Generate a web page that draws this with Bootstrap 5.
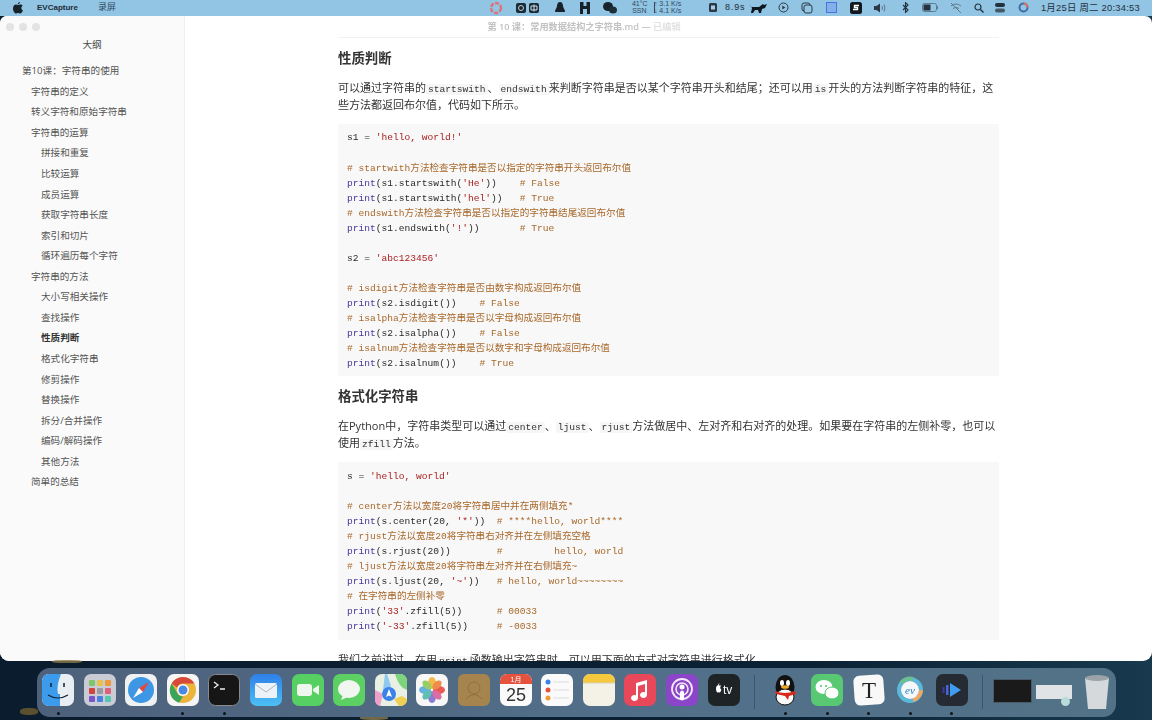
<!doctype html>
<html lang="zh"><head><meta charset="utf-8"><title>EVCapture</title>
<link href="https://cdn.jsdelivr.net/npm/bootstrap@5.3.0/dist/css/bootstrap.min.css" rel="stylesheet">
<style>
html,body{height:100%}
body{width:1152px;height:720px;overflow:hidden;background:linear-gradient(90deg,#0a1c2d 0,#0b2234 70%,#183a4e 100%);font-family:"Open Sans","Noto Sans CJK SC",sans-serif;color:#333;position:relative;filter:blur(.4px)}
.menubar{height:16px;background:#92c4e3;font-family:"Liberation Sans","Noto Sans CJK SC",sans-serif;font-size:9px;color:#1e2c38;padding-left:13px;white-space:nowrap}
.menubar svg{display:block}
.appname{font-weight:700;margin-left:14px;width:61px;font-size:8px}
.appmenu{color:#2f4a5e}
.statrow{padding-right:12px}
.stat-temp{font-size:7px;line-height:6.5px;color:#2f4a5e;width:15px;text-align:center;margin-right:7px;border-right:0}
.stat-sep{width:1px;height:11px;background:#2f4a5e;margin-right:-1px}
.stat-speed{font-size:7px;line-height:6.5px;color:#2f4a5e;width:30px;margin-right:24px}
.chipnum{letter-spacing:.9px;width:21px;margin-left:7px;margin-right:3px}
.m3{margin-right:3px}.m5{margin-right:5px}.m13{margin-right:13px}.m15{margin-right:15px}.m16{margin-right:16px}
.s21{width:21.500px}.s22{width:22px}.s23{width:23.500px}.s24{width:24px}.s24b{width:24.500px}.s25{width:25px}.s26{width:26px}
.s21,.s22,.s23,.s24,.s24b,.s25,.s26{flex:none}
.clock{font-size:9.4px;letter-spacing:.25px;margin-left:5px;color:#22313d}
.winframe{height:645px;background:#fff;border-radius:7px 7px 9px 9px;overflow:hidden;position:relative}
.lights{position:absolute;left:6px;top:7px;gap:5px}
.lights i{display:block;width:8px;height:8px;border-radius:50%;background:#e3e3e3}
.wintitle{position:absolute;left:0;right:0;top:4px;padding-left:16px;text-align:center;font-size:9.200px;line-height:13px;color:#c2c2c2;font-weight:600}
.wintitle em{font-style:normal;color:#e2e2e2}
.outline{width:185px;flex:none;background:#fafafa;border-right:1px solid #f0f0f0;height:645px;font-size:9.6px;color:#555;padding-top:21px}
.outline-h{text-align:center;font-size:9.6px;line-height:16px;margin-bottom:8.3px;color:#444}
.oitem{height:20.55px;line-height:20.55px;white-space:nowrap}
.ol1{padding-left:22px}.ol2{padding-left:31px}.ol3{padding-left:41px}
.oactive{font-weight:700;color:#333}
.docpane{padding-left:153px;width:814px;height:645px;overflow:hidden}
.docrule{border-top:1px solid #f2f2f2;margin-top:21px;height:0;width:661px}
.dochead{font-size:13.4px;line-height:20px;font-weight:600;color:#333;margin:0}
.docpara{font-size:11px;line-height:17.2px;margin:0;color:#333;width:661px}
.docpara code{font-family:"Liberation Mono",monospace;font-size:9.6px;line-height:1;color:#333;background:#f6f6f6;padding:0 2px;border-radius:2px}
.codewrap{background:#f8f8f8;width:661px;margin:0;padding:6.500px 9px 5px;font-family:"Liberation Mono","Noto Sans CJK SC",monospace;font-size:9.6px;line-height:15.07px;color:#2a2a2a;white-space:pre;overflow:hidden}
.kb{color:#44389c}.ks{color:#a22}.kc{color:#a8682a}
.gap-a{margin-top:9.5px}.gap-b{margin-top:11px}.gap-b2{margin-top:10.5px}.gap-c{margin-top:11px}.gap-d{margin-top:10px}.gap-e{margin-top:11.5px}
.dockbar{position:absolute;left:37px;top:668px;width:1079px;height:49px;background:linear-gradient(90deg,#4e617b,#52708a 60%,#527287);border-radius:13px;padding:6px 0 0 5px}
.dockbar svg{display:block;width:32px;height:32px;flex:none}
.dslot{width:41.6px;flex:none;position:relative;height:40px}
.dslot.on::after{content:"";position:absolute;left:14.500px;top:38px;width:3px;height:3px;border-radius:50%;background:#0b1218}
.dsep1,.dsep2{width:1px;height:34px;background:#3f5568;flex:none;margin-top:1px}
.dsep1{margin:1px 14px 0 5.400px}
.dsep2{margin:1px 10px 0 4.500px}
.speck{position:absolute;background:#8a7a4a;border-radius:40%;opacity:.8}
.sp1{left:52px;top:660px;width:30px;height:3px}
.sp2{left:20px;top:708px;width:18px;height:7px;background:#6e5c30}
.sp3{left:360px;top:716px;width:28px;height:4px}
.thumbb{width:39px;height:24px;background:#1a1a1a;border:1px solid #4a5a68;margin-top:5px;flex:none}
.thumbw{width:36px;height:14px;background:#dfe3e6;margin:11px 0 0 4px;flex:none;position:relative}
.thumbw::after{content:"";position:absolute;right:2px;top:12px;width:9px;height:9px;border-radius:50%;background:#b8dcd8}
.dockbar svg.trashcan{margin-left:9px;width:32px;height:36px}
</style></head><body>
<div class="menubar d-flex align-items-center">
  <svg width="10" height="12" viewBox="0 0 10 12"><path fill="#17222b" d="M7 0c0 1.200-1 2.300-2.200 2.300C4.700 1.100 5.800.1 7 0zM5 3c.7 0 1.400-.5 2.400-.5 1 0 1.800.5 2.300 1.200-2 1.200-1.600 3.800.3 4.600-.6 1.500-1.700 3.200-2.800 3.200-.8 0-1.100-.5-2.100-.5s-1.400.5-2.100.5C1.700 11.500 0 8.900 0 6.500 0 4 1.500 2.600 3 2.600c.8 0 1.400.4 2 .4z"/></svg>
  <span class="appname">EVCapture</span><span class="appmenu">录屏</span>
  <div class="ms-auto d-flex align-items-center statrow">
    <svg width="14" height="14" viewBox="0 0 14 14" class="m13"><circle cx="7" cy="7" r="5" fill="none" stroke="#e0707a" stroke-width="2.400" stroke-dasharray="4 1.500"/></svg>
    <svg width="10" height="10" viewBox="0 0 10 10" class="m3"><rect width="10" height="10" rx="2" fill="#1c2a34"/><circle cx="5" cy="5" r="2.500" fill="none" stroke="#bcd"/></svg>
    <svg width="10" height="10" viewBox="0 0 10 10" class="m16"><rect width="10" height="10" rx="2" fill="#1c2a34"/><path d="M2 3h6v4H2zM5 1.500v7" fill="none" stroke="#cde"/></svg>
    <svg width="10" height="12" viewBox="0 0 10 12" class="m15"><path fill="#17222b" d="M5 0c2 0 3 2 3 4 0 2 2 3 2 6H0c0-3 2-4 2-6 0-2 1-4 3-4z"/></svg>
    <svg width="10" height="12" viewBox="0 0 10 12" class="m13"><path fill="#17222b" d="M0 0h3.500v4h3V0H10v12H7V7H3v5H0z"/></svg>
    <svg width="14" height="12" viewBox="0 0 14 12" class="m15"><ellipse cx="5" cy="4.500" rx="5" ry="4.500" fill="#17222b"/><ellipse cx="10" cy="8" rx="4" ry="3.500" fill="#1f2d38"/></svg>
    <span class="stat-temp">41°C<br>SSN</span>
    <span class="stat-sep"></span>
    <span class="stat-speed">↑ 3.1 K/s<br>↓ 4.1 K/s</span>
    <svg width="10" height="11" viewBox="0 0 10 11"><rect x="1" y="1" width="8" height="9" rx="1.500" fill="#2a3a45"/><rect x="3" y="3.500" width="4" height="4" fill="#a9cde4"/></svg>
    <span class="chipnum">8.9s</span>
    <svg width="18" height="10" viewBox="0 0 18 10" class="m5"><path fill="#0d1820" d="M0 1l2 3h8l4-3 1 1 3-1-2 4-3 1-1 4h-2l-1-3H6L4 10H2l1-5z"/></svg>
    <span class="s23"><svg width="11" height="11" viewBox="0 0 11 11" class="mx-auto"><circle cx="5.500" cy="5.500" r="4.500" fill="none" stroke="#2a3a45"/><path d="M4.300 3.500l3 2-3 2z" fill="#2a3a45"/></svg></span>
    <span class="s23"><svg width="12" height="12" viewBox="0 0 12 12" class="mx-auto"><rect x="1" y="1" width="8" height="8" rx="2" fill="none" stroke="#2a3a45"/><rect x="3" y="3" width="8" height="8" rx="2" fill="#92c4e3" stroke="#2a3a45"/></svg></span>
    <span class="s25"><svg width="11" height="11" viewBox="0 0 11 11" class="mx-auto"><rect x=".5" y=".5" width="10" height="10" fill="#86aeea" stroke="#3f78e0"/></svg></span>
    <span class="s25"><svg width="12" height="12" viewBox="0 0 12 12" class="mx-auto"><rect width="12" height="12" rx="2.500" fill="#10181e"/><path d="M9 3.500H4.500v2h3v2H3" fill="none" stroke="#fff" stroke-width="1.400"/></svg></span>
    <span class="s24"><svg width="13" height="10" viewBox="0 0 13 10" class="mx-auto"><path fill="#2a3a45" d="M0 3h2.500L6 .5v9L2.500 7H0z"/><path d="M8 3q1 2 0 4M10 1.500q2 3.500 0 7" fill="none" stroke="#5f7a8c"/></svg></span>
    <span class="s24b"><svg width="7" height="11" viewBox="0 0 7 11" class="mx-auto"><path d="M1 3l5 5-2.500 2.500v-10L6 3 1 8" fill="none" stroke="#22313d" stroke-width="1.100"/></svg></span>
    <span class="s26"><svg width="17" height="9" viewBox="0 0 17 9" class="mx-auto"><rect x=".5" y=".5" width="14" height="8" rx="2" fill="none" stroke="#5f7a8c"/><rect x="1.500" y="1.500" width="7" height="6" fill="#22313d"/><path d="M15.500 3v3" stroke="#5f7a8c"/></svg></span>
    <span class="s25"><svg width="12" height="10" viewBox="0 0 12 10" class="mx-auto"><path d="M1 3q5-4 10 0M3 5.500q3-2.500 6 0M1 0l10 10" fill="none" stroke="#5f7a8c"/></svg></span>
    <span class="s21"><svg width="10" height="10" viewBox="0 0 10 10" class="mx-auto"><circle cx="4" cy="4" r="3" fill="none" stroke="#22313d" stroke-width="1.200"/><path d="M6.500 6.500L9.500 9.500" stroke="#22313d" stroke-width="1.400"/></svg></span>
    <span class="s22"><svg width="12" height="10" viewBox="0 0 12 10" class="mx-auto"><rect width="10" height="4" rx="2" fill="#22313d"/><rect y="5.500" width="10" height="4" rx="2" fill="#455a68"/></svg></span>
    <span class="s24"><svg width="11" height="11" viewBox="0 0 11 11" class="mx-auto"><circle cx="5.500" cy="5.500" r="4" fill="none" stroke="#3a6fa8" stroke-width="2"/><path d="M5.500 1.500a4 4 0 0 1 4 4" fill="none" stroke="#d8705a" stroke-width="2"/></svg></span>
    <span class="clock">1月25日 周二 20:34:53</span>
  </div>
</div>

<div class="winframe d-flex">
  <div class="outline">
    <div class="outline-h">大纲</div>
    <div class="oitem ol1">第10课：字符串的使用</div>
    <div class="oitem ol2">字符串的定义</div>
    <div class="oitem ol2">转义字符和原始字符串</div>
    <div class="oitem ol2">字符串的运算</div>
    <div class="oitem ol3">拼接和重复</div>
    <div class="oitem ol3">比较运算</div>
    <div class="oitem ol3">成员运算</div>
    <div class="oitem ol3">获取字符串长度</div>
    <div class="oitem ol3">索引和切片</div>
    <div class="oitem ol3">循环遍历每个字符</div>
    <div class="oitem ol2">字符串的方法</div>
    <div class="oitem ol3">大小写相关操作</div>
    <div class="oitem ol3">查找操作</div>
    <div class="oitem ol3 oactive">性质判断</div>
    <div class="oitem ol3">格式化字符串</div>
    <div class="oitem ol3">修剪操作</div>
    <div class="oitem ol3">替换操作</div>
    <div class="oitem ol3">拆分/合并操作</div>
    <div class="oitem ol3">编码/解码操作</div>
    <div class="oitem ol3">其他方法</div>
    <div class="oitem ol2">简单的总结</div>
  </div>
  <div class="docpane">
    <div class="docrule"></div>
    <h2 class="dochead gap-a">性质判断</h2>
    <p class="docpara gap-b">可以通过字符串的<code>startswith</code>、<code>endswith</code>来判断字符串是否以某个字符串开头和结尾；还可以用<code>is</code>开头的方法判断字符串的特征，这些方法都返回布尔值，代码如下所示。</p>
    <pre class="codewrap gap-c">s1 = <span class="ks">'hello, world!'</span>

<span class="kc"># startwith方法检查字符串是否以指定的字符串开头返回布尔值</span>
<span class="kb">print</span>(s1.startswith(<span class="ks">'He'</span>))    <span class="kc"># False</span>
<span class="kb">print</span>(s1.startswith(<span class="ks">'hel'</span>))   <span class="kc"># True</span>
<span class="kc"># endswith方法检查字符串是否以指定的字符串结尾返回布尔值</span>
<span class="kb">print</span>(s1.endswith(<span class="ks">'!'</span>))       <span class="kc"># True</span>

s2 = <span class="ks">'abc123456'</span>

<span class="kc"># isdigit方法检查字符串是否由数字构成返回布尔值</span>
<span class="kb">print</span>(s2.isdigit())    <span class="kc"># False</span>
<span class="kc"># isalpha方法检查字符串是否以字母构成返回布尔值</span>
<span class="kb">print</span>(s2.isalpha())    <span class="kc"># False</span>
<span class="kc"># isalnum方法检查字符串是否以数字和字母构成返回布尔值</span>
<span class="kb">print</span>(s2.isalnum())    <span class="kc"># True</span></pre>
    <h2 class="dochead gap-d">格式化字符串</h2>
    <p class="docpara gap-b2">在Python中，字符串类型可以通过<code>center</code>、<code>ljust</code>、<code>rjust</code>方法做居中、左对齐和右对齐的处理。如果要在字符串的左侧补零，也可以使用<code>zfill</code>方法。</p>
    <pre class="codewrap gap-c">s = <span class="ks">'hello, world'</span>

<span class="kc"># center方法以宽度20将字符串居中并在两侧填充*</span>
<span class="kb">print</span>(s.center(20, <span class="ks">'*'</span>))  <span class="kc"># ****hello, world****</span>
<span class="kc"># rjust方法以宽度20将字符串右对齐并在左侧填充空格</span>
<span class="kb">print</span>(s.rjust(20))        <span class="kc">#         hello, world</span>
<span class="kc"># ljust方法以宽度20将字符串左对齐并在右侧填充~</span>
<span class="kb">print</span>(s.ljust(20, <span class="ks">'~'</span>))   <span class="kc"># hello, world~~~~~~~~</span>
<span class="kc"># 在字符串的左侧补零</span>
<span class="kb">print</span>(<span class="ks">'33'</span>.zfill(5))      <span class="kc"># 00033</span>
<span class="kb">print</span>(<span class="ks">'-33'</span>.zfill(5))     <span class="kc"># -0033</span></pre>
    <p class="docpara gap-e">我们之前讲过，在用<code>print</code>函数输出字符串时，可以用下面的方式对字符串进行格式化。</p>
  </div>
  <div class="lights d-flex"><i></i><i></i><i></i></div>
  <div class="wintitle">第 10 课：常用数据结构之字符串.md — <em>已编辑</em></div>
</div>

<i class="speck sp1"></i><i class="speck sp2"></i><i class="speck sp3"></i>

<div class="dockbar d-flex">
  <div class="dslot on"><svg viewBox="0 0 32 32"><rect width="32" height="32" rx="7" fill="#e9eef3"/><path d="M0 7a7 7 0 0 1 7-7h12q-5 12-3 20h2v12H7a7 7 0 0 1-7-7z" fill="#3c9bea"/><path d="M9 9v4M22 9v4" stroke="#123" stroke-width="1.500"/><path d="M6 21q10 6 20 0" fill="none" stroke="#123" stroke-width="1.200"/></svg></div>
  <div class="dslot"><svg viewBox="0 0 32 32"><rect width="32" height="32" rx="7" fill="#c9ccd4"/><g><rect x="5" y="6" width="6" height="6" rx="1" fill="#7fc66a"/><rect x="13" y="6" width="6" height="6" rx="1" fill="#e8c24e"/><rect x="21" y="6" width="6" height="6" rx="1" fill="#ee9a3c"/><rect x="5" y="14" width="6" height="6" rx="1" fill="#d2453d"/><rect x="13" y="14" width="6" height="6" rx="1" fill="#9a9aa2"/><rect x="21" y="14" width="6" height="6" rx="1" fill="#e0607a"/><rect x="5" y="22" width="6" height="6" rx="1" fill="#7a55c8"/><rect x="13" y="22" width="6" height="6" rx="1" fill="#4a80e0"/><rect x="21" y="22" width="6" height="6" rx="1" fill="#55c8b0"/></g></svg></div>
  <div class="dslot"><svg viewBox="0 0 32 32"><rect width="32" height="32" rx="7" fill="#eef0f2"/><circle cx="16" cy="16" r="13" fill="#3d97e4"/><path d="M24 8L14 14l4 4z" fill="#e8483c"/><path d="M8 24l6-10 4 4z" fill="#fff"/></svg></div>
  <div class="dslot on"><svg viewBox="0 0 32 32"><rect width="32" height="32" rx="7" fill="#f5f5f5"/><circle cx="16" cy="16" r="13" fill="#eab53a"/><path d="M16 3a13 13 0 0 1 11.300 6.500H16a6.500 6.500 0 0 0-6 4L4.700 9.500A13 13 0 0 1 16 3z" fill="#d9483b"/><path d="M4.700 9.500L10 18.500a6.500 6.500 0 0 0 6 4l-4 6.200A13 13 0 0 1 4.700 9.500z" fill="#3ba55a"/><circle cx="16" cy="16" r="6" fill="#fff"/><circle cx="16" cy="16" r="4.500" fill="#4a88e8"/></svg></div>
  <div class="dslot on"><svg viewBox="0 0 32 32"><rect x=".5" y=".5" width="31" height="31" rx="7" fill="#161616" stroke="#8a8a8a"/><path d="M6 8l4 3-4 3M12 15h5" fill="none" stroke="#eee" stroke-width="1.300"/></svg></div>
  <div class="dslot"><svg viewBox="0 0 32 32"><defs><linearGradient id="mg" x1="0" y1="0" x2="0" y2="1"><stop offset="0" stop-color="#2f7fe8"/><stop offset="1" stop-color="#4cc0f4"/></linearGradient></defs><rect width="32" height="32" rx="7" fill="url(#mg)"/><rect x="5" y="9" width="22" height="15" rx="1.500" fill="#edf2f6"/><path d="M5 10l11 8 11-8" fill="none" stroke="#a9b6c2"/></svg></div>
  <div class="dslot"><svg viewBox="0 0 32 32"><rect width="32" height="32" rx="7" fill="#56cf63"/><rect x="5" y="10" width="15" height="12" rx="3" fill="#eef6ee"/><path d="M21 15l6-4v10l-6-4z" fill="#eef6ee"/></svg></div>
  <div class="dslot"><svg viewBox="0 0 32 32"><rect width="32" height="32" rx="7" fill="#5cd062"/><ellipse cx="16" cy="15" rx="11" ry="9" fill="#f1f7f0"/><path d="M10 21l-2 5 7-3z" fill="#f1f7f0"/></svg></div>
  <div class="dslot"><svg viewBox="0 0 32 32"><rect width="32" height="32" rx="7" fill="#e8f0e4"/><path d="M20 0h5a7 7 0 0 1 7 7v9q-8-2-12-16z" fill="#7cd47c"/><path d="M0 16l8 4-3 12a7 7 0 0 1-5-7z" fill="#f0a0c8"/><path d="M24 32l-5-7 8-3 5 3q0 7-7 7z" fill="#f0cf55"/><path d="M12 0l4 12-4 6-4-2 2-16z" fill="#8cc8f0"/><circle cx="14" cy="20" r="7" fill="#3b82e8"/><path d="M14 15l3 8-3-1.500L11 23z" fill="#fff"/></svg></div>
  <div class="dslot"><svg viewBox="0 0 32 32"><rect width="32" height="32" rx="7" fill="#f7f7f7"/><g opacity=".88"><ellipse cx="16" cy="9" rx="4" ry="6" fill="#f2b233"/><ellipse cx="16" cy="23" rx="4" ry="6" fill="#7a6ccc"/><ellipse cx="9" cy="16" rx="6" ry="4" fill="#52a8e0"/><ellipse cx="23" cy="16" rx="6" ry="4" fill="#e8453c"/><ellipse cx="11" cy="11" rx="5.500" ry="3.500" fill="#8cc850" transform="rotate(45 11 11)"/><ellipse cx="21" cy="11" rx="5.500" ry="3.500" fill="#ee7e32" transform="rotate(-45 21 11)"/><ellipse cx="11" cy="21" rx="5.500" ry="3.500" fill="#4bb8a8" transform="rotate(-45 11 21)"/><ellipse cx="21" cy="21" rx="5.500" ry="3.500" fill="#d85a98" transform="rotate(45 21 21)"/></g></svg></div>
  <div class="dslot"><svg viewBox="0 0 32 32"><rect width="32" height="32" rx="6" fill="#a6844e"/><circle cx="16" cy="14" r="6" fill="none" stroke="#8f7040"/><path d="M8 25q8-9 16 0" fill="none" stroke="#8f7040"/></svg></div>
  <div class="dslot"><svg viewBox="0 0 32 32"><rect width="32" height="32" rx="7" fill="#fafafa"/><path d="M0 10V7a7 7 0 0 1 7-7h18a7 7 0 0 1 7 7v3z" fill="#e5533f"/><text x="16" y="8" text-anchor="middle" font-size="7" fill="#fff" font-family="Liberation Sans,Noto Sans CJK SC,sans-serif">1月</text><text x="16" y="27" text-anchor="middle" font-size="18" fill="#333" font-family="Liberation Sans,sans-serif">25</text></svg></div>
  <div class="dslot"><svg viewBox="0 0 32 32"><rect width="32" height="32" rx="7" fill="#fafafa"/><circle cx="7" cy="8" r="2.500" fill="#3b82e8"/><circle cx="7" cy="16" r="2.500" fill="#e5533f"/><circle cx="7" cy="24" r="2.500" fill="#ee9a3c"/><path d="M12 8h16M12 16h16M12 24h16" stroke="#ddd"/></svg></div>
  <div class="dslot"><svg viewBox="0 0 32 32"><rect width="32" height="32" rx="7" fill="#f4f1e6"/><path d="M0 9V7a7 7 0 0 1 7-7h18a7 7 0 0 1 7 7v2z" fill="#f5c93e"/><path d="M0 9h32" stroke="#d8d2bc"/></svg></div>
  <div class="dslot"><svg viewBox="0 0 32 32"><rect width="32" height="32" rx="7" fill="#e9475a"/><path d="M12 9l11-3v15a3.500 3 0 1 1-2-2.700V10l-7 2v12a3.500 3 0 1 1-2-2.700z" fill="#fff"/></svg></div>
  <div class="dslot"><svg viewBox="0 0 32 32"><rect width="32" height="32" rx="7" fill="#8b45c8"/><circle cx="16" cy="15" r="10" fill="none" stroke="#f3e8fa" stroke-width="1.800"/><circle cx="16" cy="15" r="6" fill="none" stroke="#f3e8fa" stroke-width="1.600"/><circle cx="16" cy="13" r="2.500" fill="#fff"/><rect x="14" y="16.500" width="4" height="10" rx="2" fill="#fff"/></svg></div>
  <div class="dslot"><svg viewBox="0 0 32 32"><rect width="32" height="32" rx="7" fill="#1e2326"/><path d="M8 14q0-2 2-3 .5-1.500 1.500-2-.2 1.500-1 2.200 1 0 1.500.3 1 0 1.500-.3-1.500 1-1.200 2.500 0 1.300 1.200 2-1 2.800-2 2.800-.5 0-1-.3-.5.300-1 .3Q8 18 8 14z" fill="#fff"/><text x="15" y="20" font-size="12" fill="#fff" font-family="Liberation Sans,sans-serif">tv</text></svg></div>
  <div class="dsep1"></div>
  <div class="dslot on"><svg viewBox="0 0 32 32"><ellipse cx="16" cy="13" rx="9.500" ry="12" fill="#111"/><ellipse cx="16" cy="23" rx="9" ry="8" fill="#fafafa" stroke="#111"/><ellipse cx="13" cy="9" rx="2" ry="3" fill="#fff"/><ellipse cx="19" cy="9" rx="2" ry="3" fill="#fff"/><ellipse cx="16" cy="13" rx="4" ry="1.800" fill="#f0a820"/><path d="M6 17q10 4 20 0l1 3-7 2-1 4-3-4-9-2z" fill="#d8281c"/></svg></div>
  <div class="dslot on"><svg viewBox="0 0 32 32"><rect width="32" height="32" rx="7" fill="#58c972"/><ellipse cx="13" cy="13" rx="8.500" ry="7" fill="#fff"/><ellipse cx="21" cy="19" rx="7" ry="6" fill="#fff" stroke="#58c972"/><circle cx="10" cy="12" r="1.100" fill="#58c972"/><circle cx="15" cy="12" r="1.100" fill="#58c972"/></svg></div>
  <div class="dslot on"><svg viewBox="0 0 32 32"><rect x="1" y="1" width="30" height="30" rx="6" fill="#f8f8f8" transform="rotate(-4 16 16)"/><text x="16" y="24" text-anchor="middle" font-size="23" fill="#222" font-family="Liberation Serif,serif">T</text></svg></div>
  <div class="dslot on"><svg viewBox="0 0 32 32"><g fill="none" stroke-width="4"><circle cx="16" cy="16" r="11" stroke="#5bb8d8"/><path d="M27 16a11 11 0 0 1-8 10" stroke="#f0a860"/><path d="M7 9a11 11 0 0 1 12-4" stroke="#6cc090"/></g><circle cx="16" cy="16" r="9" fill="#f4f8fa"/><text x="16" y="20" text-anchor="middle" font-size="11" font-style="italic" fill="#2a80c0" font-family="Liberation Serif,serif">ev</text></svg></div>
  <div class="dslot on"><svg viewBox="0 0 32 32"><rect width="32" height="32" rx="7" fill="#262b33"/><path d="M14 9l11 7-11 7z" fill="#3f9cf0"/><rect x="10" y="11" width="2.500" height="10" fill="#4a62d8"/><rect x="6.500" y="13" width="2" height="6" fill="#3a3aa0"/></svg></div>
  <div class="dsep2"></div>
  <div class="thumbb"></div><div class="thumbw"></div>
  <svg viewBox="0 0 32 36" class="trashcan"><path d="M4 4h24l-3 31H7z" fill="#d5d9dc"/><ellipse cx="16" cy="4" rx="12" ry="3" fill="#9ba3a8"/></svg>
</div>
<script src="https://cdn.jsdelivr.net/npm/bootstrap@5.3.0/dist/js/bootstrap.bundle.min.js"></script>
</body></html>
